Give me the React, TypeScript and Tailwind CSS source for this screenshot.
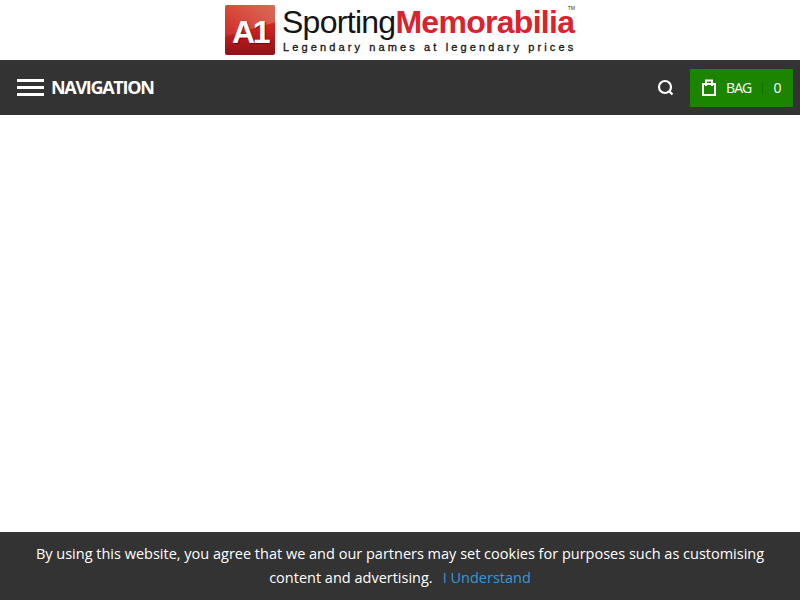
function Logo() {
  return (
    <div className="flex items-start gap-[7px]">
      <div className="relative mt-[5px] flex h-[50px] w-[50px] items-center justify-center overflow-hidden rounded-[2px] bg-gradient-to-b from-[#d8392c] via-[#cc2022] to-[#8f1116]">
        <div className="absolute -left-[10px] -top-[30px] h-[52px] w-[80px] -rotate-[16deg] bg-gradient-to-r from-[#e2604a]/20 to-[#d98a70]/80" />
        <span className="relative mt-[4px] font-['Liberation_Sans',sans-serif] text-[32px] font-bold leading-none tracking-[-2.5px] text-white [text-shadow:1px_1px_1px_rgba(90,0,0,0.7)]">
          A1
        </span>
      </div>
      <div className="flex w-[293px] flex-col font-['Liberation_Sans',sans-serif]">
        <div className="relative mt-[4px] flex h-[35px] items-center whitespace-nowrap text-[32px] leading-none tracking-[-0.72px]">
          <span className="text-[#141414]">Sporting</span>
          <span className="font-bold text-[#d9232e]">Memorabilia</span>
          <span className="absolute right-0 top-[2px] text-[5px] leading-none tracking-normal text-[#333]">TM</span>
        </div>
        <div className="mt-[1px] whitespace-nowrap pl-[1px] text-[11px] leading-[14px] tracking-[3.12px] text-[#111] [-webkit-text-stroke:0.3px_#111]">
          Legendary names at legendary prices
        </div>
      </div>
    </div>
  );
}

function SearchIcon() {
  return (
    <svg width="17" height="17" viewBox="0 0 17 17" fill="none" stroke="white" strokeWidth="2.2">
      <circle cx="8" cy="8" r="6" />
      <path d="M12.5 12.5l3 3" />
    </svg>
  );
}

function BagIcon() {
  return (
    <svg width="16" height="17" viewBox="0 0 16 17" fill="none" stroke="white" strokeWidth="2">
      <rect x="2" y="5" width="12" height="11" />
      <path d="M5 7V1.5h6V7" />
    </svg>
  );
}

export default function App() {
  return (
    <div className="min-h-[600px] bg-white font-['Open_Sans',sans-serif]">
      <header className="flex h-[60px] justify-center">
        <Logo />
      </header>
      <nav className="flex h-[55px] items-center justify-between bg-[#333333] pl-[17px] pr-[7px]">
        <div className="flex items-center gap-[7px]">
          <div className="flex w-[27px] flex-col gap-[4px]">
            <span className="h-[3px] bg-white" />
            <span className="h-[3px] bg-white" />
            <span className="h-[3px] bg-white" />
          </div>
          <span className="text-[18px] font-bold tracking-[-1.3px] text-white">NAVIGATION</span>
        </div>
        <div className="flex items-center gap-[16px]">
          <SearchIcon />
          <div className="flex h-[38px] w-[103px] items-center bg-[#1b8500] pl-[11px] text-white">
            <BagIcon />
            <span className="ml-[9px] text-[14px] font-medium tracking-[-0.9px]">BAG</span>
            <span className="ml-[11px] h-[12px] w-px bg-[#156b00]" />
            <span className="ml-[10px] text-[14px] font-medium">0</span>
          </div>
        </div>
      </nav>
      <div className="fixed bottom-0 left-0 right-0 flex h-[68px] items-center justify-center bg-[#333333] px-[30px] text-center text-[14.5px] leading-[24px] text-white">
        <p>
          By using this website, you agree that we and our partners may set cookies for purposes such as customising
          content and advertising.
          <a className="ml-[10px] text-[#3498db]">I Understand</a>
        </p>
      </div>
    </div>
  );
}
